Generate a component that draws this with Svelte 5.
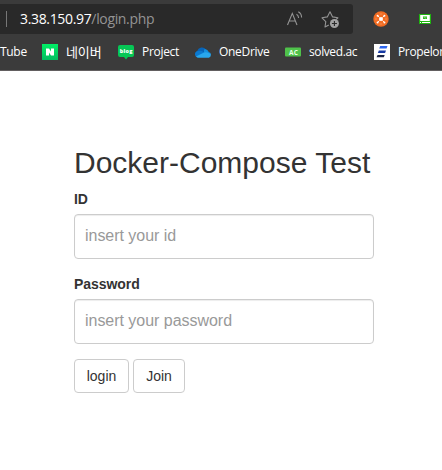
<script>
  const bookmarks = [
    { icon: 'naver', label: '네이버', width: 36 },
    { icon: 'blog', label: 'Project', width: 37 },
    { icon: 'cloud', label: 'OneDrive', width: 50 },
    { icon: 'ac', label: 'solved.ac', width: 49 },
    { icon: 'propel', label: 'Propelor', width: 44 }
  ];
</script>

<div class="window">
  <header>
    <div class="toolbar">
      <div class="address">
        <span class="divider"></span>
        <span class="url"><b>3.38.150.97</b>/login.php</span>
        <svg class="read" width="18" height="18" viewBox="0 0 18 18" fill="none" stroke="#949494" stroke-width="1.1">
          <path d="M1.5 15 6.3 3.4 11 15M3.2 11h6.2M10.5 4.2q2 1.2 2.1 3.8M12.3 1.8q3.2 1.8 3.3 5.6" />
        </svg>
        <svg class="star" width="20" height="20" viewBox="0 0 20 20" fill="none">
          <path d="M7.8 16 4 18l.8-5.4L1 8.8l5.3-.9L9 2.7l2.6 5.2 5.3.9-1.7 1.7" stroke="#949494" stroke-width="1.1" stroke-linejoin="round" />
          <circle cx="13.4" cy="14.5" r="4.5" fill="#a2a2a2" />
          <path d="M13.4 12v5M10.9 14.5h5" stroke="#292929" stroke-width="1.1" />
        </svg>
      </div>
      <svg class="ext1" width="16" height="16" viewBox="0 0 16 16">
        <circle cx="8" cy="8" r="7.7" fill="#f26c22" />
        <path d="m5 5 1.5 1.5M11 5 9.5 6.5M5 11l1.5-1.5M11 11 9.5 9.5" stroke="#fff" stroke-width=".9" />
        <circle cx="8" cy="8" r="2" fill="#fff" />
        <g fill="#fff">
          <circle cx="4.6" cy="4.8" r="1" /><circle cx="11.4" cy="4.8" r="1" />
          <circle cx="4.6" cy="11.4" r="1" /><circle cx="11.4" cy="11.4" r="1" />
        </g>
        <path d="M6.7 3h2.6M3 6.8v2.4M13 6.8v2.4M6.7 13h2.6" stroke="#f8b48b" stroke-width=".5" />
      </svg>
      <svg class="ext2" width="12" height="10" viewBox="0 0 12 10">
        <path fill="#20b510" d="M0 0h12v10H0z" />
        <path fill="#fff" d="M1.2 1h9.6v6H1.2zM1 8h1v1H1zM3 8h8v1H3z" />
        <path fill="#20b510" d="M4 2.5h4V5H4z" />
        <path d="m5 4.5v-1.5l2 1.5V3" stroke="#b4efac" stroke-width=".5" fill="none" />
      </svg>
    </div>
    <nav>
      <span class="tube">Tube</span>
      {#each bookmarks as item}
        <span class="bookmark">
          <svg width="16" height="16" viewBox="0 0 16 16">
            {#if item.icon === 'naver'}
              <defs><linearGradient id="green" x2="0" y2="1"><stop stop-color="#00ef65" /><stop offset="1" stop-color="#03bd60" /></linearGradient></defs>
              <path fill="url(#green)" d="M0 0h16v16H0z" />
              <path fill="#fff" d="M4 4.5h3l2 3v-3h3v7H9l-2-3v3H4z" />
            {:else if item.icon === 'blog'}
              <path fill="#06c755" d="M2 1h12q2 0 2 2v8q0 2-2 2h-4l-2 2.5L6 13H2q-2 0-2-2V3q0-2 2-2z" />
              <text x="1.7" y="8.7" font-size="5.4" font-weight="900" fill="#fff" textLength="12.6">blog</text>
            {:else if item.icon === 'cloud'}
              <path fill="#0864b8" d="M2.2 7.1A5 5 0 0 1 11 5.4L9 10 0 11q0-3 2.2-3.9z" />
              <path fill="#1490df" d="M9 5.6q3-1.6 4.8 2.5 2.2.6 2.2 3L9 9.8z" />
              <path fill="#0b79d0" d="M3.5 7q2.3-.8 5 .9l4 2.4L3 13.5Q0 13 0 10q.4-3 3.5-3z" />
              <path fill="#29a8ed" d="m1 12.5 8-3.9q1.2-.7 3.1 0l3.2 1.1q1.5 3-1.4 4H4q-2 0-3-1.2z" />
            {:else if item.icon === 'ac'}
              <rect y="3.5" width="16" height="9" rx="1" fill="#4fc34b" />
              <text x="3.9" y="10.5" font-size="6.5" font-weight="700" fill="#e9ffe8" textLength="8.7">AC</text>
            {:else}
              <path fill="#fff" d="M0 0h16v16H0z" />
              <path fill="#2e66ee" d="M6.2 2h7.3l-.9 2.4H5.2z" />
              <path fill="#173aa5" d="M4.8 6.6H12L11.1 9H3.9z" />
              <path fill="#1c2547" d="M3.5 11h7.2l-.9 2.3H2.6z" />
            {/if}
          </svg>
          <span class="label {item.icon}" style="width: {item.width}px">{item.label}</span>
        </span>
      {/each}
    </nav>
  </header>
  <main>
    <form onsubmit={(event) => event.preventDefault()}>
      <h2>Docker-Compose Test</h2>
      <label for="user-id">ID</label>
      <input id="user-id" type="text" placeholder="insert your id" />
      <label for="password">Password</label>
      <input id="password" type="password" placeholder="insert your password" />
      <div class="actions">
        <button type="submit">login</button>
        <button type="button">Join</button>
      </div>
    </form>
  </main>
</div>

<style>
  .window { width: 442px; height: 470px; overflow: hidden; background: #fff; color: #333; font-family: "Liberation Sans", Arial, sans-serif; }
  header { height: 71px; box-sizing: border-box; overflow: hidden; background: #3b3b3b; border-bottom: 1px solid #625e60; font-family: "Open Sans", "Noto Sans CJK KR", sans-serif; }
  .toolbar { height: 36px; display: flex; align-items: flex-start; }
  .address { width: 353px; height: 30px; margin-top: 4px; box-sizing: border-box; display: flex; align-items: center; background: #292929; border-radius: 0 3px 3px 0; flex: none; }
  .divider { width: 1px; height: 16px; margin-left: 6px; background: #777; }
  .url { width: 266px; margin-left: 13px; white-space: nowrap; font-size: 14px; line-height: 20px; letter-spacing: -.34px; color: #949494; }
  .url b { font-weight: 400; color: #fff; }
  .star { margin-left: 17px; }
  .ext1 { margin: 11px 0 0 20px; }
  .ext2 { margin: 14px 0 0 30px; }
  nav { height: 32px; display: flex; align-items: center; gap: 16px; white-space: nowrap; font-size: 12px; line-height: 18px; letter-spacing: -.3px; color: #fff; }
  .tube { width: 26px; flex: none; }
  .bookmark { display: flex; align-items: center; gap: 8px; flex: none; }
  svg { display: block; flex: none; }
  .label { display: block; }
  .naver { font-size: 13px; letter-spacing: -.1px; }
  .ac { letter-spacing: -.4px; }
  .propel { letter-spacing: -.35px; }
  main { display: flex; justify-content: center; padding-top: 75px; }
  form { width: 300px; margin-left: 6px; }
  h2 { margin: 0 0 10px; font-size: 30px; line-height: 33px; font-weight: 400; white-space: nowrap; }
  label { display: block; margin-bottom: 5px; font-size: 14px; line-height: 20px; font-weight: 700; letter-spacing: -.05px; }
  input { display: block; box-sizing: border-box; width: 300px; height: 45px; margin: 0 0 15px; padding: 9px 10px 11px; border: 1px solid #ccc; border-radius: 4px; background: #fff; font: 16px/23px "Liberation Sans", Arial, sans-serif; letter-spacing: -.03px; box-shadow: inset 0 1px 1px rgb(0 0 0 / 7.5%); }
  input::placeholder { color: #999; opacity: 1; }
  .actions { display: flex; gap: 4px; }
  button { box-sizing: border-box; height: 34px; width: 52px; padding: 6px 0; border: 1px solid #ccc; border-radius: 4px; background: #fff; color: #333; font: 14px/20px "Liberation Sans", Arial, sans-serif; }
  button[type="submit"] { width: 55px; }
</style>
